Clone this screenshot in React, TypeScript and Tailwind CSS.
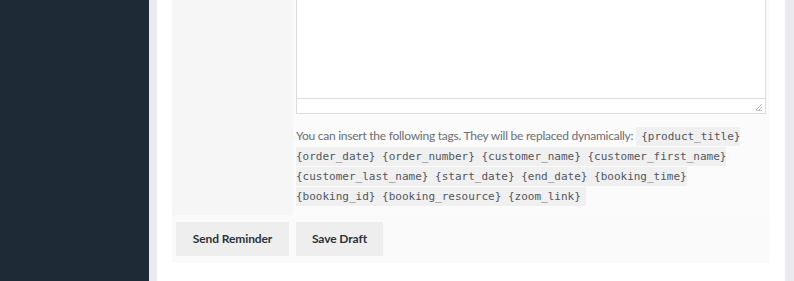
import React from 'react';

const tags = [
  '{product_title}',
  '{order_date}',
  '{order_number}',
  '{customer_name}',
  '{customer_first_name}',
  '{customer_last_name}',
  '{start_date}',
  '{end_date}',
  '{booking_time}',
  '{booking_id}',
  '{booking_resource}',
  '{zoom_link}',
];

function ResizeGrip() {
  return (
    <svg width="8" height="8" viewBox="0 0 8 8" className="absolute right-[2px] bottom-[2px]">
      <line x1="7" y1="1" x2="1" y2="7" stroke="#b5b5b5" strokeWidth="1" />
      <line x1="7" y1="4" x2="4" y2="7" stroke="#b5b5b5" strokeWidth="1" />
      <line x1="1" y1="7.5" x2="7" y2="7.5" stroke="#c5c5c5" strokeWidth="1" />
    </svg>
  );
}

export default function App() {
  return (
    <div
      className="flex h-[281px] w-[794px] overflow-hidden bg-white"
      style={{fontFamily: 'Lato, "Noto Sans", sans-serif'}}
    >
      <div className="w-[149px] shrink-0 bg-[#1e2a36]" />
      <div className="w-[8px] shrink-0 bg-[#ebebef]" />

      <div className="flex-1 px-[15px]">
        <div className="bg-[#fafafa]">
          {/* message row */}
          <div className="flex">
            <div className="w-[121px] shrink-0 bg-[#f6f6f6]" />
            <div className="flex-1 bg-[#fbfbfb] pl-[3px] pr-[4px] pb-[9px]">
              <div className="h-[98px] border-x border-[#dcdcde] bg-white" />
              <div className="relative h-[16px] border border-[#dcdcde] bg-white">
                <ResizeGrip />
              </div>
              <p className="mt-[12px] text-[12px] leading-[20px] tracking-[-0.25px] text-[#6a6e73]">
                You can insert the following tags. They will be replaced dynamically:{' '}
                <code
                  className="bg-[#f0f0f1] px-[5px] py-[3px] text-[11px] leading-[0] tracking-normal text-[#50575e]"
                  style={{fontFamily: '"DejaVu Sans Mono", monospace'}}
                >
                  {tags.join(' ')}
                </code>
              </p>
            </div>
          </div>

          {/* actions */}
          <div className="flex gap-[7px] px-[4px] py-[7px]">
            <button className="h-[34px] w-[113px] bg-[#eeeeee] text-[12px] font-bold tracking-[-0.1px] text-[#2c3338]">
              Send Reminder
            </button>
            <button className="h-[34px] w-[87px] bg-[#eeeeee] text-[12px] font-bold tracking-[-0.1px] text-[#2c3338]">
              Save Draft
            </button>
          </div>
        </div>
      </div>

      <div className="w-[9px] shrink-0 bg-[#ebebef]" />
    </div>
  );
}
